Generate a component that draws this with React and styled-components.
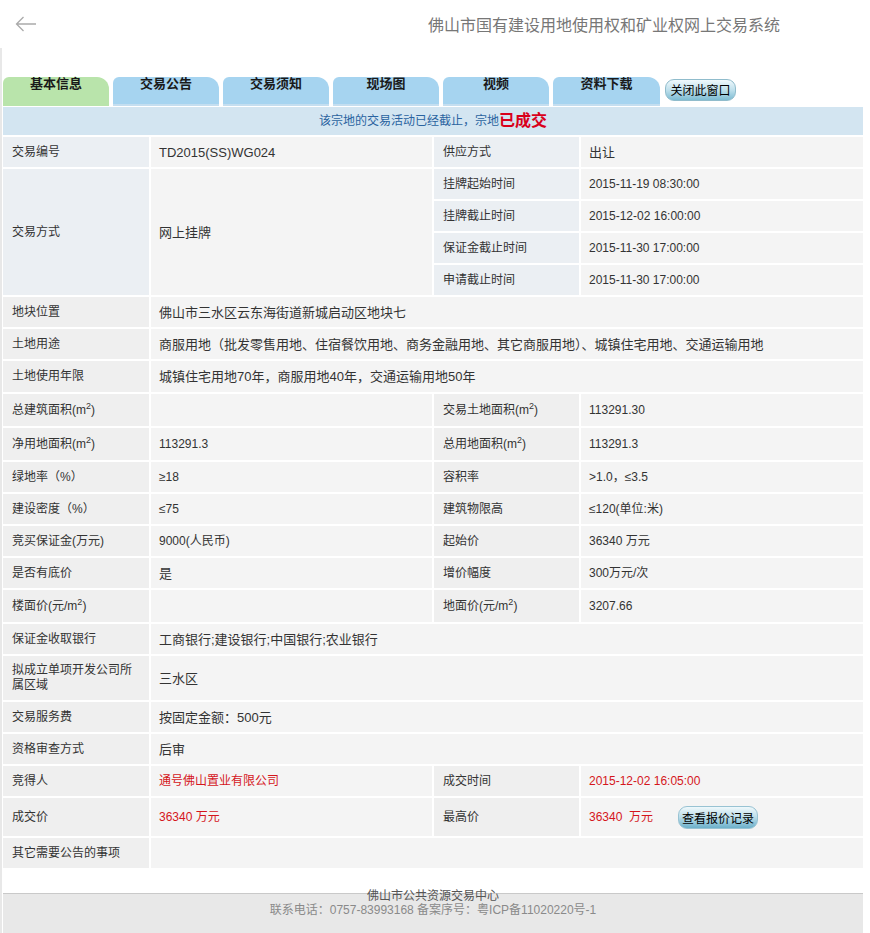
import React from "react";
import styled, { createGlobalStyle } from "styled-components";

const GlobalStyle = createGlobalStyle`
  html, body {
    margin: 0;
    padding: 0;
    background: #fff;
  }
  body {
    font-family: "Liberation Sans", "Noto Sans CJK SC", sans-serif;
    font-size: 12px;
    color: #333;
    overflow: hidden;
  }
`;

const CJK = `"Liberation Sans", "Noto Sans CJK SC", sans-serif`;

const Header = styled.header`
  height: 48px;
  display: flex;
  align-items: center;
  padding: 0 90px 0 15px;
  box-sizing: border-box;
`;

const BackArrow = styled.svg`
  width: 22px;
  height: 16px;
  display: block;
`;

const SystemTitle = styled.h1`
  margin: 0 0 0 auto;
  font: normal 16px/20px "Noto Sans CJK SC", sans-serif;
  color: #777;
`;

const Main = styled.div`
  border-left: 2px solid #e8e8e8;
  padding: 29px 0 0 1px;
  width: 860px;
`;

const TabBar = styled.nav`
  display: flex;
  align-items: flex-start;
  gap: 4px;
  height: 29px;
`;

const Tab = styled.div`
  width: ${(p) => p.$w || 106}px;
  height: 29px;
  box-sizing: border-box;
  border-radius: 6px 12px 0 0;
  background: ${(p) => (p.$active ? "#b9e4ab" : "#a6d4f0")};
  border-bottom: ${(p) => (p.$active ? "none" : "2px solid #c4def0")};
  text-align: center;
  font: bold 13px/12px "Noto Sans CJK SC", sans-serif;
  color: #1a1a1a;
`;

const CloseButton = styled.button`
  margin: 2px 0 0 1px;
  width: 71px;
  height: 22px;
  padding: 0;
  box-sizing: border-box;
  border: 1px solid #90bccc;
  border-radius: 9px;
  background: linear-gradient(#f0f9fc, #bfe0ec 50%, #7dbcd3);
  font: 12px/20px "Noto Sans CJK SC", sans-serif;
  color: #000;
`;

const Notice = styled.div`
  margin-top: 1px;
  height: 28px;
  background: #d3e5f1;
  display: flex;
  align-items: center;
  justify-content: center;
  font: 12px/16px ${CJK};
  color: #2a63a0;
`;

const Deal = styled.strong`
  font-size: 16px;
  color: #d9001b;
`;

const Sheet = styled.div`
  margin-top: 2px;
  display: grid;
  grid-template-columns: 146px 281px 145px 282px;
  grid-template-rows:
    30px 30px 30px 30px 30px 30px 30px 31px 32px 32px 30px
    30px 30px 30px 32px 30px 44px 30px 30px 30px 38px 30px;
  gap: 2px;
`;

const Cell = styled.div`
  display: flex;
  align-items: center;
  box-sizing: border-box;
  min-width: 0;
  line-height: 15px;
  grid-row: ${(p) => (p.$rows ? `span ${p.$rows}` : "auto")};
`;

const Label = styled(Cell)`
  padding: 0 8px 0 9px;
  background: ${(p) => (p.$tint ? "#ebeff3" : "#efefef")};
  font-size: 12px;
  color: #333;
`;

const Value = styled(Cell)`
  padding: 0 8px;
  background: #f4f4f4;
  font-size: ${(p) => (p.$big ? "13px" : "12px")};
  color: ${(p) => (p.$red ? "#d4161c" : "#333")};
  grid-column: ${(p) => (p.$wide ? "span 3" : "auto")};
`;

const Text = styled.span`
  display: inline;
`;

const Sup = styled.sup`
  font-size: 9px;
  line-height: 0;
  vertical-align: 5px;
`;

const RecordButton = styled.button`
  margin-left: 25px;
  height: 23px;
  padding: 0 3px;
  box-sizing: border-box;
  border: 1px solid #98c3d3;
  border-radius: 9px;
  background: linear-gradient(#eff8fb, #b9dce9 50%, #6cb0ca);
  font: 12px/21px "Noto Sans CJK SC", sans-serif;
  color: #000;
`;

const Footer = styled.footer`
  margin-top: 25px;
  height: 40px;
  box-sizing: border-box;
  border-top: 1px solid #c9c9c9;
  background: #e8e8e8;
  text-align: center;
  font: 12px/14px ${CJK};
`;

const FooterTitle = styled.div`
  margin-top: -5px;
  color: #555;
`;

const FooterInfo = styled.div`
  color: #8a8a8a;
`;

const AreaLabel = ({ children, unit }) => (
  <Label>
    <Text>
      {children}
      {unit}m<Sup>2</Sup>)
    </Text>
  </Label>
);

const tabs = ["基本信息", "交易公告", "交易须知", "现场图", "视频", "资料下载"];

export default function App() {
  return (
    <>
      <GlobalStyle />
      <Header>
        <BackArrow viewBox="0 0 22 16">
          <path d="M21 8H1.5M8.5 1L1.5 8l7 7" fill="none" stroke="#aaa" strokeWidth="1.3" />
        </BackArrow>
        <SystemTitle>佛山市国有建设用地使用权和矿业权网上交易系统</SystemTitle>
      </Header>
      <Main>
        <TabBar>
          {tabs.map((t, i) => (
            <Tab key={t} $active={i === 0} $w={i === 5 ? 107 : 106}>
              {t}
            </Tab>
          ))}
          <CloseButton>关闭此窗口</CloseButton>
        </TabBar>
        <Notice>
          该宗地的交易活动已经截止，宗地<Deal>已成交</Deal>
        </Notice>
        <Sheet>
          <Label $tint>交易编号</Label>
          <Value $big>TD2015(SS)WG024</Value>
          <Label $tint>供应方式</Label>
          <Value $big>出让</Value>

          <Label $tint $rows={4}>交易方式</Label>
          <Value $big $rows={4}>网上挂牌</Value>
          <Label $tint>挂牌起始时间</Label>
          <Value>2015-11-19 08:30:00</Value>
          <Label $tint>挂牌截止时间</Label>
          <Value>2015-12-02 16:00:00</Value>
          <Label $tint>保证金截止时间</Label>
          <Value>2015-11-30 17:00:00</Value>
          <Label $tint>申请截止时间</Label>
          <Value>2015-11-30 17:00:00</Value>

          <Label>地块位置</Label>
          <Value $big $wide>佛山市三水区云东海街道新城启动区地块七</Value>
          <Label>土地用途</Label>
          <Value $big $wide>
            商服用地（批发零售用地、住宿餐饮用地、商务金融用地、其它商服用地）、城镇住宅用地、交通运输用地
          </Value>
          <Label>土地使用年限</Label>
          <Value $big $wide>城镇住宅用地70年，商服用地40年，交通运输用地50年</Value>

          <AreaLabel unit="(">总建筑面积</AreaLabel>
          <Value />
          <AreaLabel unit="(">交易土地面积</AreaLabel>
          <Value>113291.30</Value>

          <AreaLabel unit="(">净用地面积</AreaLabel>
          <Value>113291.3</Value>
          <AreaLabel unit="(">总用地面积</AreaLabel>
          <Value>113291.3</Value>

          <Label>绿地率（%）</Label>
          <Value>≥18</Value>
          <Label>容积率</Label>
          <Value>&gt;1.0，≤3.5</Value>

          <Label>建设密度（%）</Label>
          <Value>≤75</Value>
          <Label>建筑物限高</Label>
          <Value>≤120(单位:米)</Value>

          <Label>竞买保证金(万元)</Label>
          <Value>9000(人民币)</Value>
          <Label>起始价</Label>
          <Value>36340 万元</Value>

          <Label>是否有底价</Label>
          <Value $big>是</Value>
          <Label>增价幅度</Label>
          <Value>300万元/次</Value>

          <AreaLabel unit="(元/">楼面价</AreaLabel>
          <Value />
          <AreaLabel unit="(元/">地面价</AreaLabel>
          <Value>3207.66</Value>

          <Label>保证金收取银行</Label>
          <Value $big $wide>工商银行;建设银行;中国银行;农业银行</Value>
          <Label>拟成立单项开发公司所属区域</Label>
          <Value $big $wide>三水区</Value>
          <Label>交易服务费</Label>
          <Value $big $wide>按固定金额：500元</Value>
          <Label>资格审查方式</Label>
          <Value $big $wide>后审</Value>

          <Label>竞得人</Label>
          <Value $red>通号佛山置业有限公司</Value>
          <Label>成交时间</Label>
          <Value $red>2015-12-02 16:05:00</Value>

          <Label>成交价</Label>
          <Value $red>36340 万元</Value>
          <Label>最高价</Label>
          <Value $red>
            <Text>36340&nbsp; 万元</Text>
            <RecordButton>查看报价记录</RecordButton>
          </Value>

          <Label>其它需要公告的事项</Label>
          <Value $wide />
        </Sheet>
        <Footer>
          <FooterTitle>佛山市公共资源交易中心</FooterTitle>
          <FooterInfo>联系电话：0757-83993168 备案序号：粤ICP备11020220号-1</FooterInfo>
        </Footer>
      </Main>
    </>
  );
}
